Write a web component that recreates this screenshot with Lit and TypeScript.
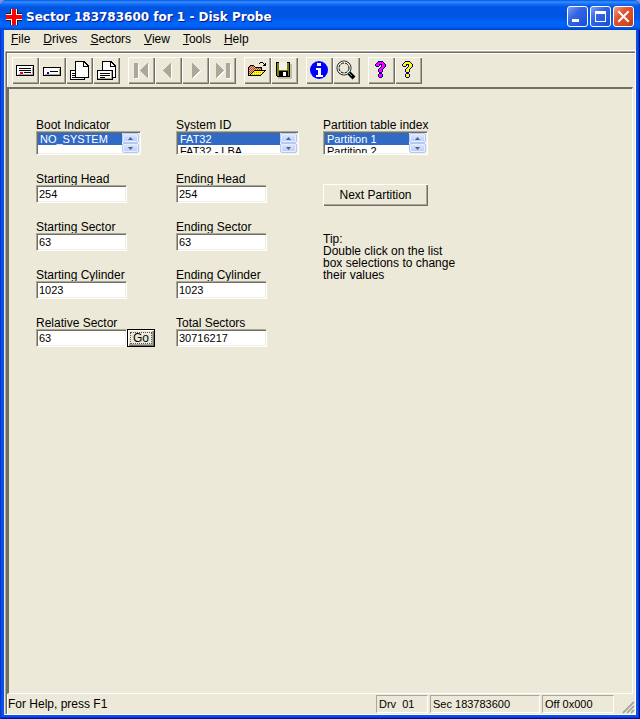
import { LitElement, html, css, svg, nothing } from "lit";
import { customElement, property } from "lit/decorators.js";

/** Palette for the small pixel bitmaps. */
const INKS: Record<string, string> = {
  k: "#000000",
  m: "#ff00ff",
  n: "#000080",
  y: "#ffff00",
  o: "#c0b020",
  r: "#b04048",
  p: "#f0b870",
};

/** Turns rows of ink letters into horizontal runs placed at (x, y). */
const bitmap = (x: number, y: number, rows: string[]) =>
  rows.map((row, j) =>
    [...row.matchAll(/([a-z])\1*/g)].map(
      (run) => svg`<rect x=${x + run.index!} y=${y + j} width=${run[0].length} height="1" fill=${INKS[run[1]]}></rect>`
    )
  );

const question = (ink: string) =>
  bitmap(7, 4, [
    "...nnnnn...",
    "..nxxxxxn..",
    ".nxxxxxxxn.",
    "nxxxnnnxxxn",
    "nxxxn.nxxxn",
    ".nnn..nxxxn",
    ".....nxxxn.",
    "....nxxxn..",
    "...nxxxn...",
    "...nxxxn...",
    "...nxxxn...",
    "....nnn....",
    "....nnn....",
    "...nxxxn...",
    "...nxxxn...",
    "...nxxxn...",
    "....nnn....",
  ].map((row) => row.replaceAll("x", ink)));

const triangleLeft = (x: number) => svg`
  <path d="M${x + 9} 7h1v15h-1l-7-7z" fill="#fff"></path>
  <path d="M${x + 9} 6v15l-8-7v-1z" fill="#aca899"></path>`;
const triangleRight = (x: number) => svg`
  <path d="M${x + 1} 7v15l8-7v-1z" fill="#fff"></path>
  <path d="M${x} 6v15l8-7v-1z" fill="#aca899"></path>`;
const bar = (x: number) => svg`
  <rect x=${x + 1} y="7" width="4" height="15" fill="#fff"></rect>
  <rect x=${x} y="6" width="4" height="15" fill="#aca899"></rect>`;

const ICONS: Record<string, unknown> = {
  drive: svg`
    <rect x="4" y="8" width="18" height="11"></rect>
    <rect x="5" y="9" width="16" height="9" fill="#fff"></rect>
    <path d="M6 17h14V10h1v8H6z" fill="#aca899"></path>
    <path d="M7 11h12v1H7zM7 13h12v1H7zM12 15h7v1h-7z"></path>
    <rect x="8" y="15" width="3" height="2" fill="#f00"></rect>`,
  volume: svg`
    <rect x="4" y="10" width="18" height="9"></rect>
    <rect x="5" y="11" width="16" height="7" fill="#fff"></rect>
    <path d="M6 17h14V12h1v6H6z" fill="#aca899"></path>
    <path d="M11 14h8v1h-8z"></path>
    <rect x="8" y="15" width="2" height="2" fill="#00f"></rect>`,
  pages: svg`
    <path d="M4 13h6v9h9v1H4z"></path>
    <path d="M5 14h5v8H5z" fill="#fff"></path>
    <path d="M6 16h4v1H6zM6 18h4v1H6zM6 20h4v1H6zM18 22v-2h1v2z"></path>
    <path d="M9 4h9l5 5v12H9z"></path>
    <path d="M10 5h7v5h5v10H10z" fill="#fff"></path>
    <path d="M18 6l3 3h-3z" fill="#fff"></path>`,
  print: svg`
    <path d="M9 4h9l5 5v12H9z"></path>
    <path d="M10 5h7v5h5v10H10z" fill="#fff"></path>
    <path d="M18 6l3 3h-3z" fill="#fff"></path>
    <rect x="4" y="13" width="16" height="10"></rect>
    <rect x="5" y="14" width="14" height="8" fill="#fff"></rect>
    <path d="M5 21h13v-7h1v8H5z" fill="#aca899"></path>
    <path d="M7 16h10v1H7zM7 18h10v1H7zM7 20h5v1H7z"></path>`,
  first: svg`${bar(6)}${triangleLeft(11)}`,
  previous: triangleLeft(7),
  next: triangleRight(10),
  last: svg`${triangleRight(7)}${bar(17)}`,
  open: bitmap(4, 5, [
    "............kkk...",
    "...........k...k.k",
    "................kk",
    "..kkkk.........kkk",
    ".krprpk...........",
    "krprprpkkkkkkk....",
    "kprprprprprprk....",
    "krprprprprprpk....",
    "kprprpkkkkkkkkkkkk",
    "krprpkyyyyyyyyyyk.",
    "kprpkyoyoyoyoyok..",
    "krpkyyyyyyyyyyk...",
    "kpkyoyoyoyoyok....",
    "kkkkkkkkkkkkk.....",
  ]),
  save: svg`
    <rect x="7" y="7" width="14" height="15" fill="#c4c0b0"></rect>
    <path d="M5 5h14v15H6l-1-1z"></path>
    <path d="M6 6h2v7h8V6h2v13h-1v-5H8v5H6z" fill="#808000"></path>
    <rect x="8" y="5" width="8" height="8" fill="#f4f2ea"></rect>
    <rect x="12" y="15" width="3" height="4" fill="#fff"></rect>`,
  info: svg`
    <circle cx="13" cy="13" r="9" fill="#00f" shape-rendering="auto"></circle>
    <path d="M11 6h4v3h-4zM10 11h5v7h2v2h-7v-2h2v-5h-2z" fill="#fff"></path>`,
  search: svg`
    <g shape-rendering="auto" fill="none" stroke="#000">
      <circle cx="11" cy="11" r="7"></circle>
      <circle cx="11" cy="11" r="6" stroke="#fff"></circle>
      <circle cx="11" cy="11" r="5" stroke-dasharray="3 1"></circle>
      <path d="M16 16l5 5" stroke-width="4"></path>
    </g>
    <path d="M16 16h1v1h1v1h1v1h-1v-1h-1v-1h-1z" fill="#0cc"></path>`,
  help: question("m"),
  context: question("y"),
};

@customElement("tool-button")
class ToolButton extends LitElement {
  @property() icon = "";
  @property() label = "";
  @property({ type: Boolean }) disabled = false;

  static styles = css`
    :host { display: block; }
    button {
      display: block; width: 27px; height: 27px; padding: 0; border: 0; background: #ece9d8;
      box-shadow: inset 1px 1px #fff, inset -1px -1px #716f64, inset -2px -2px #aca899;
    }
    svg { display: block; }
  `;

  render() {
    return html`<button aria-label=${this.label} ?disabled=${this.disabled}>
      <svg width="27" height="27" viewBox="0 0 27 27" shape-rendering="crispEdges" aria-hidden="true">${ICONS[this.icon]}</svg>
    </button>`;
  }
}

const TOOLS: [string, string][][] = [
  [["drive", "Physical drive"], ["volume", "Logical volume"], ["pages", "Read sectors"], ["print", "Write sectors"]],
  [["first", "First sector"], ["previous", "Previous sector"], ["next", "Next sector"], ["last", "Last sector"]],
  [["open", "Open"], ["save", "Save"]],
  [["info", "Volume information"], ["search", "Search sectors"]],
  [["help", "Help"], ["context", "Context help"]],
];
const MENUS = ["File", "Drives", "Sectors", "View", "Tools", "Help"];
const TIP = "Tip:\nDouble click on the list box selections to change their values";

@customElement("app-root")
class AppRoot extends LitElement {
  static styles = css`
    :host {
      display: block;
      font: 12px/12px "Liberation Sans", Arial, sans-serif;
      color: #000;
      background: #7a96df;
    }
    * { box-sizing: border-box; }
    button, input, select { font: inherit; color: inherit; margin: 0; border-radius: 0; }
    .window {
      display: flex; flex-direction: column; min-height: 100vh; padding: 0 4px 4px;
      border-radius: 7px 7px 0 0;
      background: #0a50e4;
      box-shadow: inset 1px 0 #0831d9, inset -1px -1px #00138c, inset -2px -2px #0831d9;
    }
    .titlebar {
      display: flex; align-items: center; gap: 4px; height: 30px; margin: 0 -4px; padding: 3px 6px 0;
      border-radius: 7px 7px 0 0; color: #fff;
      background: linear-gradient(#0058e6 0, #3a8cff 2px, #1470f4 4px, #0056e4 7px, #0054e3 16px, #0064fc 24px, #0060f4 27px, #0040c8 30px);
    }
    .title {
      flex: 1; margin: 0; font: bold 12px/16px "DejaVu Sans", Verdana, sans-serif;
      text-shadow: 1px 1px #0a1883; white-space: nowrap;
    }
    .caption { display: flex; gap: 2px; }
    .caption button {
      width: 21px; height: 21px; padding: 0; border: 1px solid #fff; border-radius: 3px;
      background: linear-gradient(135deg, #7d9ef2, #3264e4 40%, #2458e0 75%, #1c48c8);
    }
    .caption .close { background: linear-gradient(135deg, #f0a088, #e0502c 40%, #d84820 75%, #b83810); }
    .caption svg { display: block; }
    .body { flex: 1; display: flex; flex-direction: column; background: #ece9d8; }
    .menu { display: flex; gap: 13px; height: 20px; padding: 3px 7px 0; }
    .menu a { color: inherit; text-decoration: none; }
    .frame {
      flex: 1; display: flex; flex-direction: column; margin-left: 1px;
      border-top: 1px solid #fff; border-right: 1px solid #fff; border-bottom: 1px solid #fff;
    }
    .inner {
      flex: 1; display: flex; flex-direction: column;
      border: solid #aca899; border-width: 1px 0 0 1px;
      box-shadow: inset 1px 1px #716f64, inset 2px 2px #fff;
    }
    .toolbar { display: flex; gap: 8px; padding: 5px 6px 3px; }
    .group { display: flex; }
    .client {
      flex: 1; margin: 0 2px 0 1px; padding: 30px 27px 18px;
      border: solid; border-width: 2px 1px 1px 2px; border-color: #716f64 #fff #fff #716f64;
      display: flex; align-items: flex-start;
    }
    .column { display: flex; flex-direction: column; gap: 18px; align-items: flex-start; }
    .left { flex: 0 0 140px; }
    .middle { flex: 0 0 147px; }
    .right { flex: 1; min-width: 0; }
    .field { display: flex; flex-direction: column; align-items: flex-start; }
    .field label { white-space: nowrap; }
    .entry { display: flex; }
    input, .list {
      background: #fff; border: 1px solid; border-color: #aca899 #fff #fff #aca899;
      box-shadow: inset 1px 1px #716f64, inset -1px -1px #f1efe2;
    }
    input { width: 91px; height: 18px; padding: 1px 2px 2px; font-size: 11px; outline: 0; }
    .list { display: flex; height: 24px; padding: 1px; overflow: hidden; }
    .narrow { width: 105px; }
    .wide { width: 123px; }
    select {
      flex: 1; min-width: 0; height: 20px; padding: 0; border: 0; outline: 0; background: none;
      appearance: none; overflow: hidden; scrollbar-width: none; font-size: 11px;
    }
    option { height: 12px; min-height: 12px; padding: 0 2px; line-height: 12px; }
    option:checked { background: linear-gradient(#316ac5, #316ac5); -webkit-text-fill-color: #fff; }
    .spin { display: flex; flex-direction: column; width: 17px; }
    .spin button {
      height: 10px; padding: 0; border: 1px solid #b4c8f6; border-radius: 2px;
      background: linear-gradient(#dce6fe, #b9cbf8); box-shadow: inset 0 0 0 1px #e8effe;
    }
    .spin svg { display: block; margin: 0 auto; }
    .push {
      padding: 0; border: 0; background: #ece9d8;
      box-shadow: inset 1px 1px #fff, inset -1px -1px #716f64, inset -2px -2px #aca899;
    }
    .next { width: 105px; height: 22px; margin: 11px 0 9px; }
    .go { width: 28px; height: 18px; border: 1px solid #000; padding: 2px; }
    .go span { display: block; border: 1px dotted #555; line-height: 10px; }
    .tip { margin: 0; width: 140px; white-space: pre-line; }
    .status { display: flex; align-items: center; gap: 2px; height: 20px; padding: 0 0 0 2px; }
    .message { flex: 1; }
    .pane {
      height: 18px; padding: 2px; border: 1px solid; border-color: #aca899 #fff #fff #aca899;
      white-space: pre; font-size: 11px;
    }
    .drv { width: 52px; }
    .sec { width: 110px; }
    .off { width: 72px; }
    .grip { display: block; margin-left: 6px; align-self: flex-end; }
  `;

  private text(id: string, label: string, value: string, extra: unknown = nothing) {
    return html`<div class="field">
      <label for=${id}>${label}</label>
      <div class="entry"><input id=${id} type="text" .value=${value} />${extra}</div>
    </div>`;
  }

  private list(id: string, label: string, size: string, options: string[]) {
    return html`<div class="field">
      <label for=${id}>${label}</label>
      <div class="list ${size}">
        <select id=${id} size="2">${options.map((o, i) => html`<option ?selected=${i === 0}>${o}</option>`)}</select>
        <div class="spin">
          <button aria-label="Scroll up" tabindex="-1"><svg width="5" height="3" viewBox="0 0 5 3"><path d="M0 3L2.5 0L5 3z" fill="#4d6185"></path></svg></button>
          <button aria-label="Scroll down" tabindex="-1"><svg width="5" height="3" viewBox="0 0 5 3"><path d="M0 0h5L2.5 3z" fill="#4d6185"></path></svg></button>
        </div>
      </div>
    </div>`;
  }

  render() {
    return html`<div class="window">
      <header class="titlebar">
        <svg width="16" height="16" viewBox="0 0 16 16" shape-rendering="crispEdges" aria-hidden="true">
          <path d="M4 0h8v4h4v8h-4v4H4v-4H0V4h4z" fill="#202020"></path>
          <path d="M5 0h6v5h5v6h-5v5H5v-5H0V5h5z" fill="#fff"></path>
          <path d="M6 0h4v6h6v4h-6v6H6v-6H0V6h6z" fill="#f00"></path>
        </svg>
        <h1 class="title">Sector 183783600 for 1 - Disk Probe</h1>
        <div class="caption">
          <button aria-label="Minimize"><svg width="19" height="19" viewBox="0 0 19 19"><path d="M4 12h7v3H4z" fill="#fff"></path></svg></button>
          <button aria-label="Maximize"><svg width="19" height="19" viewBox="0 0 19 19"><path d="M4 4h11v11H4zM5 7v7h9V7z" fill="#fff" fill-rule="evenodd"></path></svg></button>
          <button class="close" aria-label="Close"><svg width="19" height="19" viewBox="0 0 19 19"><path d="M5 5l9 9M14 5l-9 9" stroke="#fff" stroke-width="2" stroke-linecap="square"></path></svg></button>
        </div>
      </header>
      <div class="body">
        <nav class="menu">${MENUS.map((m) => html`<a href="#"><u>${m[0]}</u>${m.slice(1)}</a>`)}</nav>
        <div class="frame">
          <div class="inner">
            <div class="toolbar">
              ${TOOLS.map((group, i) => html`<div class="group">
                ${group.map(([icon, label]) => html`<tool-button icon=${icon} label=${label} ?disabled=${i === 1}></tool-button>`)}
              </div>`)}
            </div>
            <main class="client">
              <div class="column left">
                ${this.list("boot", "Boot Indicator", "narrow", ["NO_SYSTEM"])}
                ${this.text("start-head", "Starting Head", "254")}
                ${this.text("start-sector", "Starting Sector", "63")}
                ${this.text("start-cylinder", "Starting Cylinder", "1023")}
                ${this.text("relative", "Relative Sector", "63", html`<button class="push go"><span>Go</span></button>`)}
              </div>
              <div class="column middle">
                ${this.list("system", "System ID", "wide", ["FAT32", "FAT32 - LBA"])}
                ${this.text("end-head", "Ending Head", "254")}
                ${this.text("end-sector", "Ending Sector", "63")}
                ${this.text("end-cylinder", "Ending Cylinder", "1023")}
                ${this.text("total", "Total Sectors", "30716217")}
              </div>
              <div class="column right">
                ${this.list("index", "Partition table index", "narrow", ["Partition 1", "Partition 2"])}
                <button class="push next">Next Partition</button>
                <p class="tip">${TIP}</p>
              </div>
            </main>
            <footer class="status">
              <span class="message">For Help, press F1</span>
              <span class="pane drv">Drv  01</span>
              <span class="pane sec">Sec 183783600</span>
              <span class="pane off">Off 0x000</span>
              <svg class="grip" width="13" height="13" viewBox="0 0 13 13" aria-hidden="true">
                <path d="M2 13L13 2M6 13l7-7M10 13l3-3" stroke="#fff"></path>
                <path d="M1 12L12 1M5 12l7-7M9 12l3-3" stroke="#aca899" stroke-width="2"></path>
              </svg>
            </footer>
          </div>
        </div>
      </div>
    </div>`;
  }
}
